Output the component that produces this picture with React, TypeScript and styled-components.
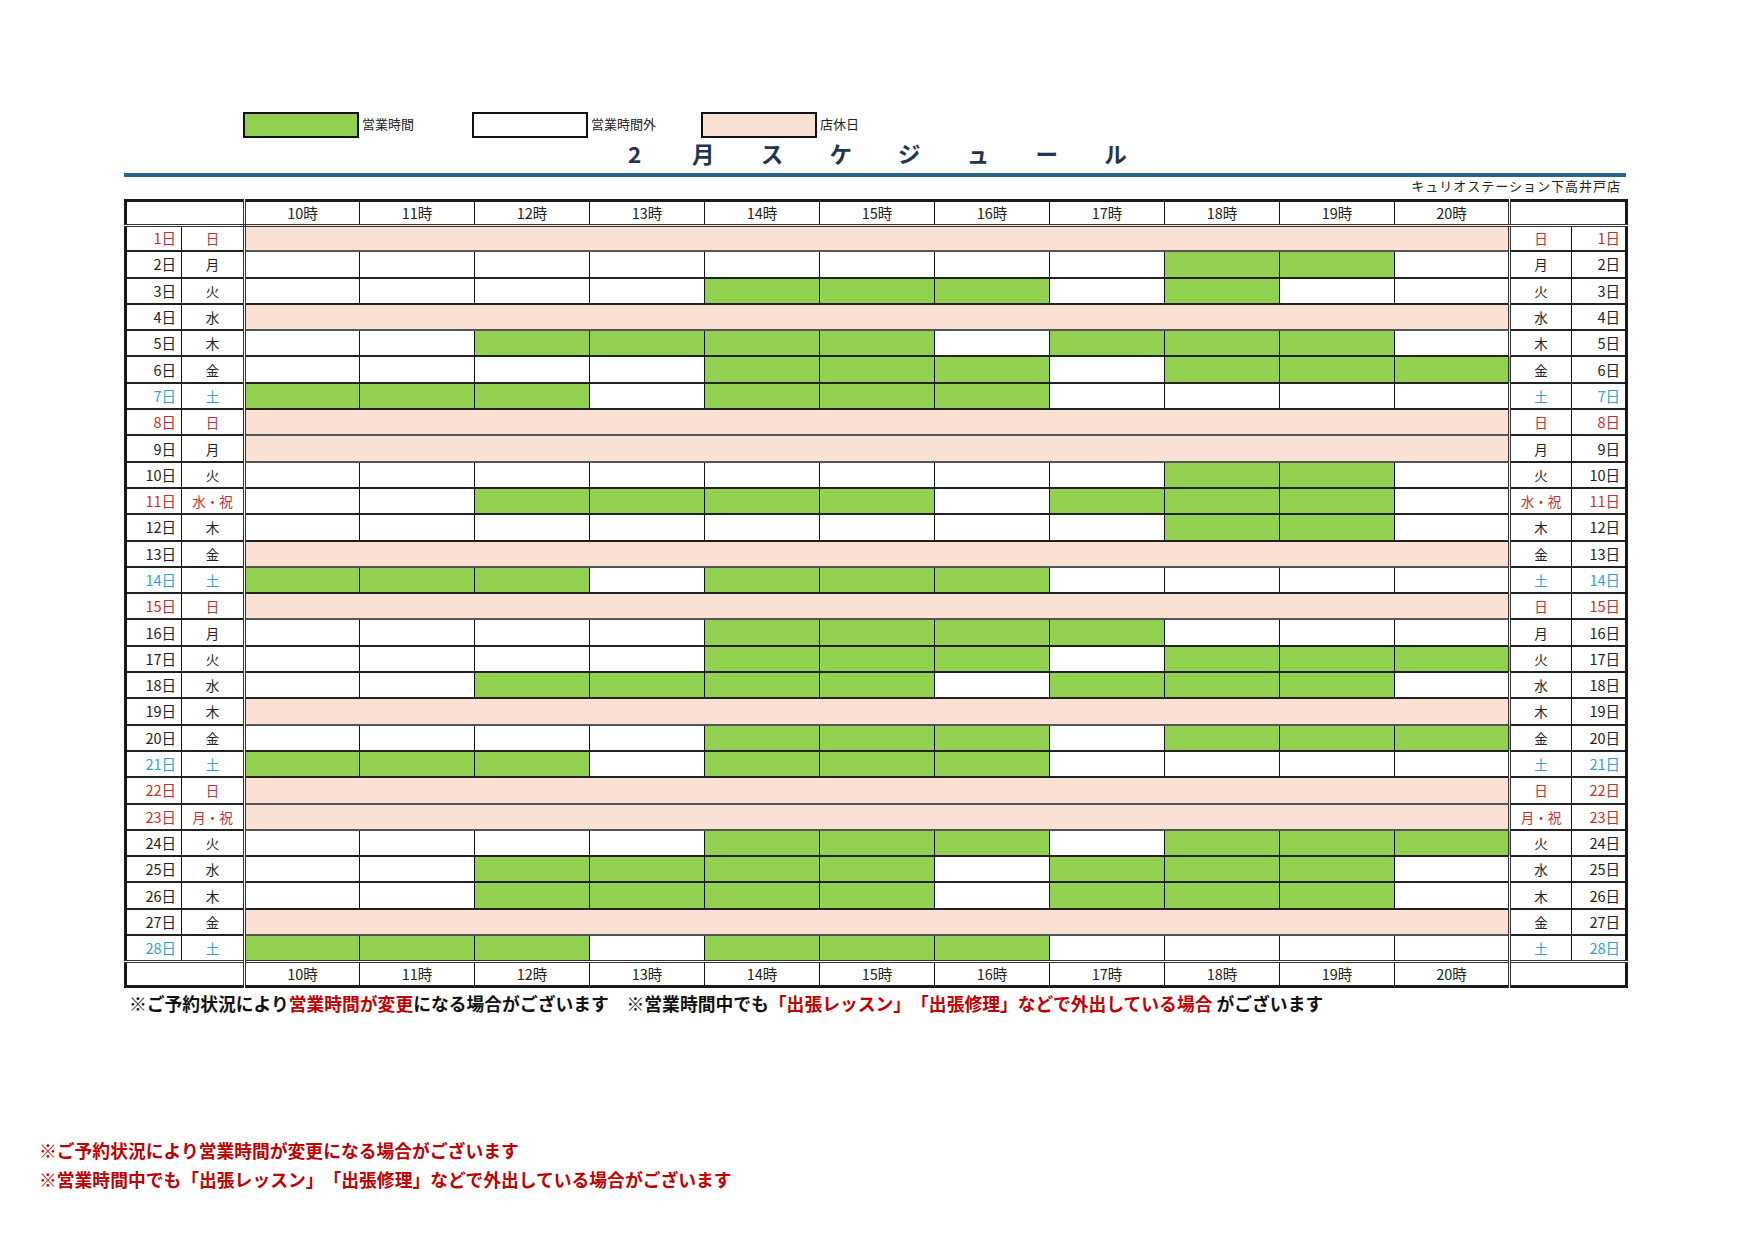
import React from 'react';
import styled, { createGlobalStyle } from 'styled-components';

const GlobalStyle = createGlobalStyle`
  html, body { margin: 0; padding: 0; background: #ffffff; }
  body {
    font-family: "Noto Sans CJK JP", "Noto Sans", sans-serif;
    color: #222;
    text-spacing-trim: space-all;
  }
`;

type Kind = 'normal' | 'sun' | 'sat';
type Day = { d: number; w: string; kind?: Kind; closed?: boolean; open?: number[] };

const HOURS = [10, 11, 12, 13, 14, 15, 16, 17, 18, 19, 20];
const A = [12, 13, 14, 15, 17, 18, 19];
const B = [14, 15, 16, 18, 19, 20];
const S = [10, 11, 12, 14, 15, 16];

const DAYS: Day[] = [
  { d: 1, w: '日', kind: 'sun', closed: true },
  { d: 2, w: '月', open: [18, 19] },
  { d: 3, w: '火', open: [14, 15, 16, 18] },
  { d: 4, w: '水', closed: true },
  { d: 5, w: '木', open: A },
  { d: 6, w: '金', open: B },
  { d: 7, w: '土', kind: 'sat', open: S },
  { d: 8, w: '日', kind: 'sun', closed: true },
  { d: 9, w: '月', closed: true },
  { d: 10, w: '火', open: [18, 19] },
  { d: 11, w: '水・祝', kind: 'sun', open: A },
  { d: 12, w: '木', open: [18, 19] },
  { d: 13, w: '金', closed: true },
  { d: 14, w: '土', kind: 'sat', open: S },
  { d: 15, w: '日', kind: 'sun', closed: true },
  { d: 16, w: '月', open: [14, 15, 16, 17] },
  { d: 17, w: '火', open: B },
  { d: 18, w: '水', open: A },
  { d: 19, w: '木', closed: true },
  { d: 20, w: '金', open: B },
  { d: 21, w: '土', kind: 'sat', open: S },
  { d: 22, w: '日', kind: 'sun', closed: true },
  { d: 23, w: '月・祝', kind: 'sun', closed: true },
  { d: 24, w: '火', open: B },
  { d: 25, w: '水', open: A },
  { d: 26, w: '木', open: A },
  { d: 27, w: '金', closed: true },
  { d: 28, w: '土', kind: 'sat', open: S },
];

const GREEN = '#92d050';
const PINK = '#fbe0d4';

const toneColor = (k?: Kind) => (k === 'sun' ? '#c62f2f' : k === 'sat' ? '#2fa2d6' : '#222');

const Page = styled.div`
  padding-top: 111px;
  width: 1754px;
  min-height: 1240px;
  box-sizing: border-box;
`;

const Sheet = styled.section`
  margin-left: 124px;
  width: 1502px;
`;

const Legend = styled.div`
  display: flex;
  align-items: center;
  padding-left: 119px;
  height: 27px;
`;

const LegendItem = styled.div`
  display: flex;
  align-items: center;
  width: 229px;
`;

const Swatch = styled.span<{ $c: string }>`
  width: 116px;
  height: 26px;
  box-sizing: border-box;
  border: 2.5px solid #111;
  background: ${(p) => p.$c};
`;

const LegendLabel = styled.span`
  margin-left: 3px;
  margin-top: -2px;
  font-size: 13px;
  color: #222;
`;

const Title = styled.h1`
  margin: 2px 0 0;
  display: flex;
  justify-content: center;
  font-size: 22.5px;
  font-weight: 700;
  line-height: 26px;
  color: #1f3550;
`;

const TitleChar = styled.span`
  width: 68.7px;
  text-align: center;
`;

const Rule = styled.div`
  height: 3.5px;
  margin-top: 7px;
  background: #2b6585;
`;

const StoreName = styled.div`
  margin: 0 0 5px;
  padding-right: 5px;
  text-align: right;
  font-size: 13px;
  letter-spacing: 1px;
  line-height: 17px;
  color: #222;
`;

const Table = styled.table`
  border-collapse: collapse;
  table-layout: fixed;
  width: 1502px;
  border: 3px solid #1a1a1a;
  font-size: 14.5px;
  color: #222;
`;

const Col = styled.col<{ $w: number }>`
  width: ${(p) => p.$w}px;
`;

const HeadCell = styled.th<{ $sep?: 'left' | 'right' }>`
  height: 22px;
  padding: 0;
  font-weight: 400;
  text-align: center;
  line-height: 20px;
  border: 1px solid #111;
  ${(p) => (p.$sep === 'right' ? 'border-right: 3px double #333;' : '')}
  ${(p) => (p.$sep === 'left' ? 'border-left: 3px double #333;' : '')}
`;

const HeadRow = styled.tr<{ $pos: 'top' | 'bottom' }>`
  th {
    ${(p) => (p.$pos === 'top' ? 'border-bottom: 3px double #333;' : 'border-top: 3px double #333;')}
  }
`;

const Row = styled.tr`
  height: 26.3px;
`;

const DateCell = styled.td<{ $tone?: Kind }>`
  padding: 0 5px 0 0;
  text-align: right;
  line-height: 20px;
  color: ${(p) => toneColor(p.$tone)};
  border-top: 2px solid #222;
  border-bottom: 2px solid #222;
  border-left: 1px solid #111;
  border-right: 1px solid #111;
`;

const DayCell = styled.td<{ $tone?: Kind; $sep: 'left' | 'right' }>`
  padding: 0;
  text-align: center;
  line-height: 20px;
  font-size: 13.5px;
  color: ${(p) => toneColor(p.$tone)};
  border-top: 2px solid #222;
  border-bottom: 2px solid #222;
  border-left: 1px solid #111;
  border-right: 1px solid #111;
  ${(p) => (p.$sep === 'right' ? 'border-right: 3px double #333;' : 'border-left: 3px double #333;')}
`;

const SlotCell = styled.td<{ $bg: string }>`
  padding: 0;
  background: ${(p) => p.$bg};
  border-top: 2px solid #222;
  border-bottom: 2px solid #222;
  border-left: 1px solid #111;
  border-right: 1px solid #111;
`;

const ClosedCell = styled.td`
  padding: 0;
  background: ${PINK};
  border-top: 2px solid #555;
  border-bottom: 2px solid #555;
`;

const Note = styled.p`
  margin: 3px 0 0 5px;
  font-size: 17.8px;
  font-weight: 700;
  line-height: 25px;
  color: #111;
  white-space: pre;
  text-spacing-trim: space-all;
`;

const Red = styled.span`
  color: #c00000;
`;

const BottomNotes = styled.div`
  margin: 120px 0 0 39px;
  font-size: 17.8px;
  font-weight: 700;
  line-height: 29px;
  color: #c00000;
  text-spacing-trim: space-all;
`;

const BottomLine = styled.div`
  white-space: pre;
`;

const HeaderRow: React.FC<{ pos: 'top' | 'bottom' }> = ({ pos }) => (
  <HeadRow $pos={pos}>
    <HeadCell colSpan={2} $sep="right" />
    {HOURS.map((h) => (
      <HeadCell key={h}>{h}時</HeadCell>
    ))}
    <HeadCell colSpan={2} $sep="left" />
  </HeadRow>
);

export default function App() {
  const title = ['2', '月', 'ス', 'ケ', 'ジ', 'ュ', 'ー', 'ル'];
  return (
    <Page>
      <GlobalStyle />
      <Sheet>
        <Legend>
          <LegendItem>
            <Swatch $c={GREEN} />
            <LegendLabel>営業時間</LegendLabel>
          </LegendItem>
          <LegendItem>
            <Swatch $c="#ffffff" />
            <LegendLabel>営業時間外</LegendLabel>
          </LegendItem>
          <LegendItem>
            <Swatch $c={PINK} />
            <LegendLabel>店休日</LegendLabel>
          </LegendItem>
        </Legend>
        <Title>
          {title.map((c, i) => (
            <TitleChar key={i}>{c}</TitleChar>
          ))}
        </Title>
        <Rule />
        <StoreName>キュリオステーション下高井戸店</StoreName>
        <Table>
          <colgroup>
            <Col $w={56} />
            <Col $w={63} />
            {HOURS.map((h) => (
              <Col key={h} $w={115} />
            ))}
            <Col $w={62} />
            <Col $w={55} />
          </colgroup>
          <thead>
            <HeaderRow pos="top" />
          </thead>
          <tbody>
            {DAYS.map((day) => (
              <Row key={day.d}>
                <DateCell $tone={day.kind}>{day.d}日</DateCell>
                <DayCell $tone={day.kind} $sep="right">
                  {day.w}
                </DayCell>
                {day.closed ? (
                  <ClosedCell colSpan={11} />
                ) : (
                  HOURS.map((h) => (
                    <SlotCell key={h} $bg={day.open?.includes(h) ? GREEN : '#ffffff'} />
                  ))
                )}
                <DayCell $tone={day.kind} $sep="left">
                  {day.w}
                </DayCell>
                <DateCell $tone={day.kind}>{day.d}日</DateCell>
              </Row>
            ))}
          </tbody>
          <tfoot>
            <HeaderRow pos="bottom" />
          </tfoot>
        </Table>
        <Note>
          ※ご予約状況により<Red>営業時間が変更</Red>になる場合がございます　※営業時間中でも
          <Red>「出張レッスン」「出張修理」などで外出している場合</Red> がございます
        </Note>
      </Sheet>
      <BottomNotes>
        <BottomLine>※ご予約状況により営業時間が変更になる場合がございます</BottomLine>
        <BottomLine>※営業時間中でも「出張レッスン」「出張修理」などで外出している場合がございます</BottomLine>
      </BottomNotes>
    </Page>
  );
}
